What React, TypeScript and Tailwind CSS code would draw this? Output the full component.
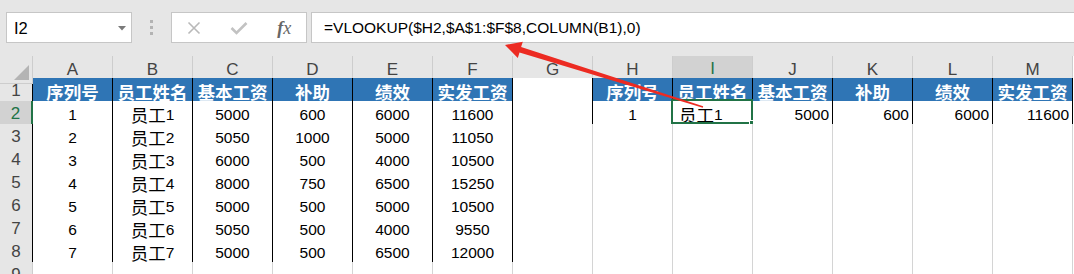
import React from "react";

const COLS = ["A", "B", "C", "D", "E", "F", "G", "H", "I", "J", "K", "L", "M"];

type Align = "c" | "l" | "r";
type Cell = { v: string; a: Align; head?: boolean };

const HEAD = ["序列号", "员工姓名", "基本工资", "补助", "绩效", "实发工资"];
const DATA = [
  ["1", "员工1", "5000", "600", "6000", "11600"],
  ["2", "员工2", "5050", "1000", "5000", "11050"],
  ["3", "员工3", "6000", "500", "4000", "10500"],
  ["4", "员工4", "8000", "750", "6500", "15250"],
  ["5", "员工5", "5000", "500", "5000", "10500"],
  ["6", "员工6", "5050", "500", "4000", "9550"],
  ["7", "员工7", "5000", "500", "6500", "12000"],
];

function inT(r: number, c: number) {
  return (r >= 1 && r <= 8 && c >= 0 && c <= 5) || (r >= 1 && r <= 2 && c >= 7 && c <= 12);
}

function getCell(r: number, c: number): Cell | null {
  if (r === 1) {
    if (c <= 5) return { v: HEAD[c], a: "c", head: true };
    if (c >= 7) return { v: HEAD[c - 7], a: "c", head: true };
    return null;
  }
  if (r >= 2 && r <= 8 && c <= 5) return { v: DATA[r - 2][c], a: "c" };
  if (r === 2 && c >= 7) {
    const v = DATA[0][c - 7];
    return { v, a: c === 7 ? "c" : c === 8 ? "l" : "r" };
  }
  return null;
}

function Txt({ s }: { s: string }) {
  const parts = s.match(/[\u4e00-\u9fff]+|[^\u4e00-\u9fff]+/g) || [];
  return (
    <>
      {parts.map((p, i) =>
        /[\u4e00-\u9fff]/.test(p) ? (
          <span key={i} className="text-[17.5px] font-['Noto_Sans_CJK_SC',sans-serif]">
            {p}
          </span>
        ) : (
          <span key={i}>{p}</span>
        )
      )}
    </>
  );
}

function GridRow({ r }: { r: number }) {
  const selRow = r === 2;
  return (
    <div className="grid grid-cols-[33px_repeat(13,80px)] h-[23px]">
      <div
        className={
          "flex items-center justify-center text-[17px] border-b border-b-[#d0d0d0] " +
          (selRow
            ? "bg-[#d2d2d2] text-[#217346] border-r-2 border-r-[#217346]"
            : "bg-[#e6e6e6] text-[#444444] border-r " + (inT(r, 0) ? "border-r-black" : "border-r-[#cdcdcd]"))
        }
      >
        {r}
      </div>
      {COLS.map((_, c) => {
        const cell = getCell(r, c);
        const rb = inT(r, c) || inT(r, c + 1);
        const bb = inT(r, c) || inT(r + 1, c);
        const sel = r === 2 && c === 8;
        return (
          <div
            key={c}
            className={
              "relative flex items-center pt-[2px] border-r border-b leading-none " +
              (rb ? "border-r-black " : "border-r-[#d4d4d4] ") +
              (bb ? "border-b-black " : "border-b-[#d4d4d4] ") +
              (cell?.head ? "bg-[#2f75b5] text-white font-bold " : "bg-white text-black ") +
              (cell?.a === "l" ? "justify-start pl-[6px] " : cell?.a === "r" ? "justify-end pr-[3px] " : "justify-center ")
            }
          >
            {cell && <Txt s={cell.v} />}
            {sel && (
              <div className="absolute -left-[2px] -top-[2px] w-[82px] h-[25px] border-2 border-[#217346] pointer-events-none">
                <div className="absolute -right-[4px] -bottom-[4px] w-[6px] h-[6px] bg-[#217346] border border-white" />
              </div>
            )}
          </div>
        );
      })}
    </div>
  );
}

export default function App() {
  const rows = [1, 2, 3, 4, 5, 6, 7, 8, 9];
  return (
    <div className="relative w-[1074px] h-[274px] overflow-hidden bg-white font-['Liberation_Sans','Noto_Sans_CJK_SC',sans-serif] text-[15.5px]">
      {/* formula bar */}
      <div className="h-[56px] bg-[#e6e6e6] flex items-start pt-[12px] pl-[6px]">
        <div className="relative w-[126px] h-[31px] bg-white border border-[#c6c6c6] flex items-center pl-[7px]">
          <span className="text-[16.5px] text-black pt-[1px]">I2</span>
          <svg className="absolute left-[111px] top-[13px]" width="8" height="5" viewBox="0 0 8 5">
            <path d="M0 0 L8 0 L4 4.5 Z" fill="#7a7a7a" />
          </svg>
        </div>
        <div className="w-[39px] h-[31px] flex flex-col items-center justify-center gap-[3px]">
          <div className="w-[3px] h-[3px] bg-[#b3b3b3]" />
          <div className="w-[3px] h-[3px] bg-[#b3b3b3]" />
          <div className="w-[3px] h-[3px] bg-[#b3b3b3]" />
        </div>
        <div className="w-[136px] h-[31px] bg-white border border-[#c6c6c6] flex items-center">
          <div className="w-[44px] flex justify-center">
            <svg width="14" height="14" viewBox="0 0 14 14">
              <path d="M1.5 1.5 L12.5 12.5 M12.5 1.5 L1.5 12.5" stroke="#b9b9b9" strokeWidth="1.6" fill="none" />
            </svg>
          </div>
          <div className="w-[48px] flex justify-center">
            <svg width="18" height="14" viewBox="0 0 18 14">
              <path d="M1.5 7 L6.5 12 L16.5 2" stroke="#c2c2c2" strokeWidth="2.6" fill="none" />
            </svg>
          </div>
          <div className="w-[44px] flex justify-center">
            <span className="font-['Liberation_Serif',serif] italic text-[18px] text-[#666666] leading-none">
              <span className="font-bold">f</span>x
            </span>
          </div>
        </div>
        <div className="ml-[4px] flex-1 h-[31px] bg-white border border-r-0 border-[#c6c6c6] flex items-center pl-[12px]">
          <span className="text-[15.5px] text-black pt-[1px]">=VLOOKUP($H2,$A$1:$F$8,COLUMN(B1),0)</span>
        </div>
      </div>

      {/* column headers */}
      <div className="grid grid-cols-[33px_repeat(13,80px)] h-[22px]">
        <div className="relative bg-[#e6e6e6] border-r border-b border-[#cdcdcd]">
          <svg className="absolute right-[3px] bottom-[3px]" width="15" height="15" viewBox="0 0 15 15">
            <path d="M15 0 L15 15 L0 15 Z" fill="#b4b4b4" />
          </svg>
        </div>
        {COLS.map((l, c) =>
          c === 8 ? (
            <div
              key={l}
              className="flex items-center justify-center text-[17px] bg-[#d2d2d2] text-[#217346] border-r border-r-[#cdcdcd] border-b-2 border-b-[#217346]"
            >
              {l}
            </div>
          ) : (
            <div
              key={l}
              className="flex items-center justify-center text-[17px] bg-[#e6e6e6] text-[#444444] border-r border-b border-[#cdcdcd]"
            >
              {l}
            </div>
          )
        )}
      </div>

      {rows.map((r) => (
        <GridRow key={r} r={r} />
      ))}

      {/* red arrow */}
      <svg className="absolute left-0 top-0 pointer-events-none" width="1074" height="274" viewBox="0 0 1074 274">
        <polygon
          points="505,45 522.8,41.7 521.1,47.1 703.2,106.2 702.8,107.8 519.5,52.5 517.8,57.9"
          fill="#ec2b22"
        />
      </svg>
    </div>
  );
}
